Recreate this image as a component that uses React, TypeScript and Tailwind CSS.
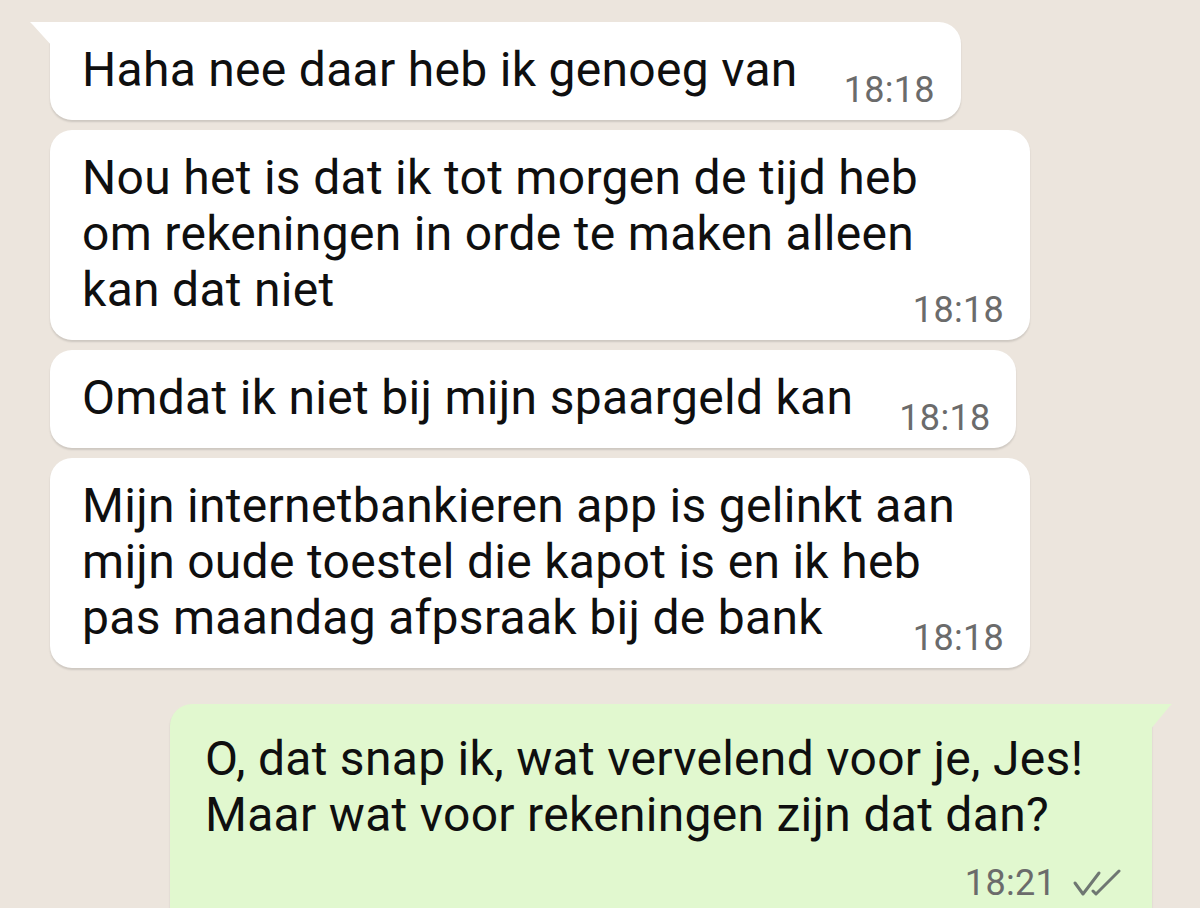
import React from "react";

interface Message {
  lines: string[];
  time: string;
  wide?: boolean;
  tail?: boolean;
}

const incoming: Message[] = [
  { lines: ["Haha nee daar heb ik genoeg van"], time: "18:18", tail: true },
  {
    lines: [
      "Nou het is dat ik tot morgen de tijd heb",
      "om rekeningen in orde te maken alleen",
      "kan dat niet",
    ],
    time: "18:18",
    wide: true,
  },
  { lines: ["Omdat ik niet bij mijn spaargeld kan"], time: "18:18" },
  {
    lines: [
      "Mijn internetbankieren app is gelinkt aan",
      "mijn oude toestel die kapot is en ik heb",
      "pas maandag afpsraak bij de bank",
    ],
    time: "18:18",
    wide: true,
  },
];

const DoubleCheck = () => (
  <svg width="50" height="28" viewBox="0 0 50 28" fill="none">
    <path
      d="M3 14 L11 25 L27 4"
      stroke="#6f7772"
      strokeWidth="3"
      strokeLinecap="round"
      strokeLinejoin="round"
    />
    <path
      d="M21 22 L24 25 L47 2"
      stroke="#6f7772"
      strokeWidth="3"
      strokeLinecap="round"
      strokeLinejoin="round"
    />
  </svg>
);

const Bubble: React.FC<{ msg: Message }> = ({ msg }) => {
  const last = msg.lines[msg.lines.length - 1];
  const rest = msg.lines.slice(0, -1);
  return (
    <div
      className={`relative rounded-[22px] bg-white pl-8 pr-[26px] pt-5 pb-[22px] shadow-[0_2px_2px_rgba(0,0,0,0.13)] ${
        msg.wide ? "w-[980px]" : "w-fit"
      } ${msg.tail ? "rounded-tl-none" : ""}`}
    >
      {msg.tail && (
        <svg
          className="absolute -left-[20px] top-0"
          width="22"
          height="24"
          viewBox="0 0 22 24"
        >
          <path d="M0 0 H22 V24 L3 3 Q1 1 0 0 Z" fill="#ffffff" />
        </svg>
      )}
      {rest.map((l, i) => (
        <div
          key={i}
          className="text-[48px] leading-[56px] tracking-[0.3px] text-[#0f0f0f]"
        >
          {l}
        </div>
      ))}
      <div className="flex items-end">
        <span className="text-[48px] leading-[56px] tracking-[0.3px] text-[#0f0f0f]">
          {last}
        </span>
        <span className="mb-[-10px] ml-auto pl-[46px] text-[36px] leading-none tracking-[0.3px] text-[#6b6b6b]">
          {msg.time}
        </span>
      </div>
    </div>
  );
};

export default function App() {
  return (
    <div
      className="h-[908px] w-[1200px] overflow-hidden bg-[#ece5dd]"
      style={{ fontFamily: "Roboto, 'Noto Sans', sans-serif" }}
    >
      <div className="flex flex-col gap-[10px] pl-[50px] pt-[22px]">
        {incoming.map((m, i) => (
          <Bubble key={i} msg={m} />
        ))}
      </div>

      <div className="mt-9 flex pl-[170px]">
        <div className="relative w-[982px] rounded-[22px] rounded-tr-none bg-[#e1f8cf] pl-[35px] pr-[30px] pt-[27px] pb-8 shadow-[0_2px_2px_rgba(0,0,0,0.13)]">
          <svg
            className="absolute -right-[20px] top-0"
            width="22"
            height="26"
            viewBox="0 0 22 26"
          >
            <path d="M22 0 H0 V26 L19 3 Q21 1 22 0 Z" fill="#e1f8cf" />
          </svg>
          <div className="text-[48px] leading-[56px] tracking-[0.3px] text-[#0f0f0f]">
            O, dat snap ik, wat vervelend voor je, Jes!
          </div>
          <div className="text-[48px] leading-[56px] tracking-[0.3px] text-[#0f0f0f]">
            Maar wat voor rekeningen zijn dat dan?
          </div>
          <div className="mt-[22px] flex items-center justify-end gap-[16px]">
            <span className="text-[36px] leading-none tracking-[0.3px] text-[#6b6b6b]">
              18:21
            </span>
            <DoubleCheck />
          </div>
        </div>
      </div>
    </div>
  );
}
